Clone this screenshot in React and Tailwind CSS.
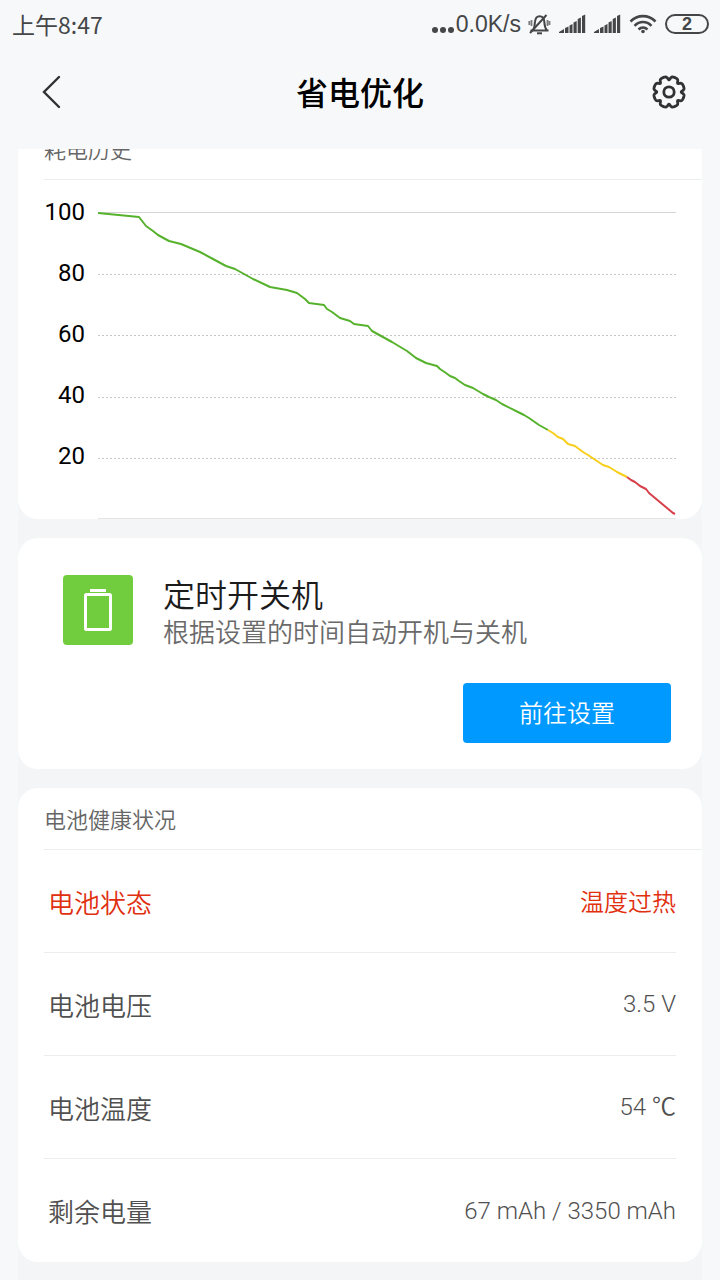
import React from 'react';

const HEALTH_ROWS = [
  { label: '电池状态', value: '温度过热', alert: true },
  { label: '电池电压', value: '3.5 V' },
  { label: '电池温度', value: '54 ℃' },
  { label: '剩余电量', value: '67 mAh / 3350 mAh' },
];

const AXIS_LABELS = [100, 80, 60, 40, 20];

// Battery level over time, one line per colour range
const LEVEL_LINES = [
  {
    color: '#56b22c',
    points:
      '0,1 41,5 48,14 55,19 60,23 71,29 83,32 102,40 115,47 128,54 137,57 155,67 172,75 189,78 199,81 207,87 211,91 226,93 229,97 234,100 242,106 252,109 256,112 270,114 274,119 294,130 309,139 318,146 328,151 339,154 342,157 348,161 352,164 357,166 361,169 367,173 375,176 380,179 385,182 391,185 398,188 404,192 420,200 426,203 431,206 441,213 450,218',
  },
  {
    color: '#f8cf1c',
    points: '450,218 455,221 460,225 465,227 470,232 477,234 485,240 490,243 505,253 511,255 519,260 529,265',
  },
  {
    color: '#d8404a',
    points: '529,265 533,268 537,270 542,274 548,277 551,281 575,301 577,302',
  },
];

// Closed wavy outline with eight teeth
const GEAR_PATH =
  Array.from({ length: 144 }, (_, i) => {
    const a = (i / 144) * Math.PI * 2;
    const r = 14.6 - 1.5 * Math.cos(8 * a) - 0.7 * Math.cos(16 * a) - 0.2 * Math.cos(24 * a);
    return `${i === 0 ? 'M' : 'L'}${(18 + r * Math.sin(a)).toFixed(2)} ${(18 - r * Math.cos(a)).toFixed(2)}`;
  }).join('') + 'Z';

const MutedBell = () => (
  <svg width="24" height="24" viewBox="0 0 24 24" fill="none" stroke="currentColor" strokeWidth="2" className="shrink-0">
    <path d="M3.500 18.5h18M6 18.500c2-3 1.500-6 2-9C8.500 6 10 4.300 12.500 4.300S17 6 17.300 9.500c.2 3.500.2 6 2.700 9" />
    <path d="M10 21.300h5" />
    <path d="M3 21 19.500 3" />
    <path d="M4.500 8v6M2.300 9v4M20.500 8v6M22.500 9v4" strokeWidth="1.800" strokeOpacity="0.7" />
  </svg>
);

const Signal = () => (
  <svg width="27" height="20" viewBox="0 0 27 20" fill="currentColor" className="shrink-0">
    <path d="M0 19v-1l5-3v4zM6 14l3.500-1.500V19H6zM10.500 11.500l3-1.500v9h-3zM14.500 8.500l3.200-1.500v12h-3.200zM18.700 5l3.200-1.500V19h-3.200zM23 2l3.200-1.500V19H23z" />
  </svg>
);

const Wifi = () => (
  <svg width="28" height="20" viewBox="0 0 28 20" fill="none" stroke="currentColor" strokeWidth="2.600" className="shrink-0">
    <path d="M1.500 7.500C8.500.3 19.500.3 26.500 7.500M5.500 11.800c5-5 12-5 17 0M9.500 15.500c2.700-2.600 6.300-2.600 9 0" />
    <circle cx="14" cy="17.500" r="1.800" fill="currentColor" stroke="none" />
  </svg>
);

const StatusBar = () => (
  <div className="flex h-12 items-center justify-between pl-3 pr-[11px] text-[#444648]">
    <span className="text-[23px] leading-8">上午8:47</span>
    <div className="flex items-center">
      <div className="flex h-5 items-end gap-0.5 pb-px pr-0.5">
        <i className="size-1.5 rounded-full bg-current" />
        <i className="size-1.5 rounded-full bg-current" />
        <i className="size-1.5 rounded-full bg-current" />
      </div>
      <span className="font-['Liberation_Sans',sans-serif] text-[23px] leading-8">0.0K/s</span>
      <div className="flex items-center gap-2 pl-1.5">
        <MutedBell />
        <Signal />
        <Signal />
        <Wifi />
        <span className="flex h-5 w-11 items-center justify-center rounded-full border-2 border-current font-['Liberation_Sans',sans-serif] text-lg font-bold leading-4">
          2
        </span>
      </div>
    </div>
  </div>
);

const Header = () => (
  <header className="flex h-[101px] items-start justify-between pl-[31px] pr-[31px] pt-6">
    <button className="flex size-10 items-center justify-center text-[#303234]" aria-label="返回">
      <svg width="20" height="34" viewBox="0 0 20 34" fill="none" stroke="currentColor" strokeWidth="2.400">
        <path d="M18 2 3 17l15 15" strokeLinecap="round" />
      </svg>
    </button>
    <h1 className="text-[32px] font-medium leading-[38px] text-black">省电优化</h1>
    <button className="flex size-10 items-center justify-center text-[#303234]" aria-label="设置">
      <svg width="36" height="36" viewBox="0 0 36 36" fill="none" stroke="currentColor" strokeWidth="2.800">
        <path d={GEAR_PATH} strokeLinejoin="round" />
        <circle cx="18" cy="18" r="5.200" />
      </svg>
    </button>
  </header>
);

const CardTitle = ({ children }) => (
  <h2 className="ml-[26px] flex h-[62px] items-center border-b border-[#eceded] text-[22px] font-[350] text-[#666666]">
    {children}
  </h2>
);

const HistoryCard = () => (
  <section className="-mt-[31px] rounded-[20px] bg-white">
    <CardTitle>耗电历史</CardTitle>
    <div className="flex pl-[26px] pr-[26px] pt-4">
      {/* Each label row spans one grid step, so the text sits level with its line */}
      <div className="w-[54px] shrink-0 pr-[13px] text-right font-['Roboto',sans-serif] text-2xl leading-8 text-black">
        {AXIS_LABELS.map((label) => (
          <div key={label} className="h-[61px]">
            {label}
          </div>
        ))}
      </div>
      <svg viewBox="0 0 578 307" preserveAspectRatio="none" className="mt-4 h-[307px] min-w-0 flex-1" fill="none">
        <path d="M0 .5H578" stroke="#d4d4d6" />
        <path d="M0 306.500H578" stroke="#e4e5e7" />
        <path d="M0 62.500H578M0 123.500H578M0 185.500H578M0 246.500H578" stroke="#c6c6c6" strokeDasharray="2 2" />
        {LEVEL_LINES.map((line) => (
          <polyline key={line.color} points={line.points} stroke={line.color} strokeWidth="2" strokeLinejoin="round" />
        ))}
      </svg>
    </div>
  </section>
);

const ScheduleCard = () => (
  <section className="rounded-[20px] bg-white pb-[26px] pl-[45px] pr-[31px] pt-[37px]">
    <div className="flex gap-[30px]">
      <div className="flex size-[70px] shrink-0 items-center justify-center rounded bg-[#72cd3e]">
        <svg width="28" height="44" viewBox="0 0 28 44" fill="none" stroke="#fff" strokeWidth="3">
          <path d="M6 2.500h16" />
          <rect x="1.500" y="6.500" width="25" height="35" rx="1" />
        </svg>
      </div>
      <div>
        <h2 className="text-[32px] font-[350] leading-9 text-[#1c1c1c]">定时开关机</h2>
        <p className="text-[26px] font-[350] leading-10 text-[#6a6a6a]">根据设置的时间自动开机与关机</p>
      </div>
    </div>
    <div className="mt-8 flex justify-end">
      <button className="h-[60px] w-52 rounded bg-[#0099ff] pb-0.5 text-2xl font-[350] text-white">前往设置</button>
    </div>
  </section>
);

const HealthCard = () => (
  <section className="rounded-[20px] bg-white">
    <CardTitle>电池健康状况</CardTitle>
    <dl className="ml-[26px] mr-[26px] divide-y divide-[#eceded]">
      {HEALTH_ROWS.map((row) => (
        <div
          key={row.label}
          className={`flex h-[103px] items-center justify-between pl-1 font-[350] ${row.alert ? 'text-[#e0300f]' : 'text-[#505050]'}`}
        >
          <dt className="text-[26px]">{row.label}</dt>
          <dd className={row.alert ? 'text-2xl' : "font-['Roboto','Noto_Sans_CJK_SC',sans-serif] text-2xl"}>{row.value}</dd>
        </div>
      ))}
    </dl>
  </section>
);

const App = () => (
  <div className="flex min-h-screen flex-col bg-[#f7f8fa] font-['Noto_Sans_CJK_SC',sans-serif]">
    <StatusBar />
    <Header />
    <main className="mx-[18px] flex flex-1 flex-col gap-[19px] overflow-hidden bg-[#f3f5f7]">
      <HistoryCard />
      <ScheduleCard />
      <HealthCard />
    </main>
  </div>
);

export default App;
